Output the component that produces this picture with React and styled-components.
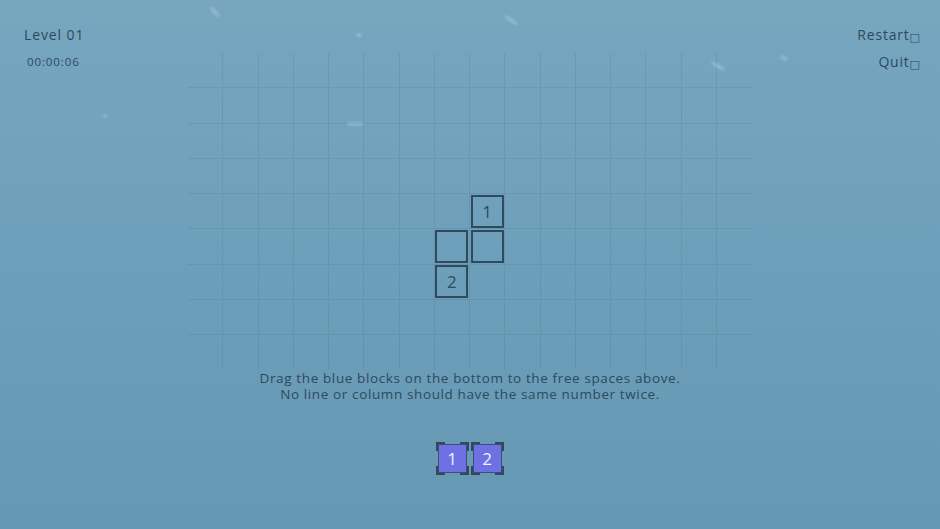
import React from 'react';
import styled, { createGlobalStyle } from 'styled-components';

const COLS = 16;
const ROWS = 9;

// pieces already placed on the board: [col, row, number]
const placed = [
  [8, 4, '1'],
  [7, 5, ''],
  [8, 5, ''],
  [7, 6, '2'],
];

const tray = ['1', '2'];

const flakes = [
  { x: 208, y: 10, w: 14, r: 45 },
  { x: 503, y: 18, w: 16, r: 35 },
  { x: 356, y: 33, w: 6, r: 0 },
  { x: 346, y: 122, w: 18, r: 0 },
  { x: 710, y: 64, w: 16, r: 30 },
  { x: 780, y: 56, w: 8, r: 20 },
  { x: 103, y: 114, w: 4, r: 70 },
];

const GlobalStyle = createGlobalStyle`
  html, body {
    margin: 0;
    padding: 0;
  }
  body {
    font-family: "Open Sans", "Liberation Sans", sans-serif;
    color: #2c4a5e;
  }
`;

function App() {
  const cells = [];
  for (let r = 0; r < ROWS; r++) {
    for (let c = 0; c < COLS; c++) {
      const piece = placed.find(p => p[0] === c && p[1] === r);
      cells.push(
        <Cell key={`${r}-${c}`} lastCol={c === COLS - 1} lastRow={r === ROWS - 1}>
          {piece && <Block>{piece[2]}</Block>}
        </Cell>
      );
    }
  }

  return (
    <Screen>
      <GlobalStyle />
      <Flakes>
        {flakes.map((f, i) => (
          <Flake key={i} style={{ left: f.x, top: f.y, width: f.w, transform: `rotate(${f.r}deg)` }} />
        ))}
      </Flakes>
      <LeftHud>
        <LevelTitle>Level 01</LevelTitle>
        <Timer>00:00:06</Timer>
      </LeftHud>
      <Center>
        <Board>{cells}</Board>
        <Hint>
          <HintLine>Drag the blue blocks on the bottom to the free spaces above.</HintLine>
          <HintLine>No line or column should have the same number twice.</HintLine>
        </Hint>
        <Tray>
          {tray.map(n => (
            <Slot key={n}>
              <Corner top left />
              <Corner top right />
              <Corner bottom left />
              <Corner bottom right />
              <Piece>{n}</Piece>
            </Slot>
          ))}
        </Tray>
      </Center>
      <RightHud>
        <MenuItem>Restart<Tofu>□</Tofu></MenuItem>
        <MenuItem>Quit<Tofu>□</Tofu></MenuItem>
      </RightHud>
    </Screen>
  );
}

const Screen = styled.div`
  position: relative;
  width: 940px;
  height: 529px;
  overflow: hidden;
  display: grid;
  grid-template-columns: 1fr 564px 1fr;
  background: linear-gradient(180deg, #77a6bf 0%, #6e9fba 50%, #6697b3 100%);
`;

const Flakes = styled.div`
  position: absolute;
  inset: 0;
  pointer-events: none;
`;

const Flake = styled.div`
  position: absolute;
  height: 4px;
  border-radius: 50%;
  background: rgba(215, 232, 244, 0.28);
  filter: blur(1.2px);
`;

const LeftHud = styled.div`
  display: flex;
  flex-direction: column;
  align-items: flex-start;
  padding: 26px 0 0 24px;
`;

const LevelTitle = styled.div`
  font-size: 14px;
  line-height: 18px;
  letter-spacing: 0.9px;
`;

const Timer = styled.div`
  margin: 11px 0 0 3px;
  font-size: 11.5px;
  line-height: 14px;
  letter-spacing: 0.9px;
`;

const RightHud = styled.div`
  display: flex;
  flex-direction: column;
  align-items: flex-end;
  gap: 9px;
  padding: 26px 20px 0 0;
`;

const MenuItem = styled.div`
  display: flex;
  align-items: center;
  height: 18px;
  font-size: 14px;
  line-height: 18px;
  letter-spacing: 0.8px;
`;

const Tofu = styled.span`
  font-family: "DejaVu Sans", sans-serif;
  font-size: 11px;
  line-height: 11px;
  letter-spacing: 0;
  position: relative;
  top: 2px;
`;

const Center = styled.div`
  display: flex;
  flex-direction: column;
  align-items: center;
  padding-top: 53px;
`;

const Board = styled.div`
  display: grid;
  grid-template-columns: repeat(${COLS}, 35.25px);
  grid-template-rows: repeat(${ROWS}, 35.25px);
`;

const Cell = styled.div`
  display: flex;
  align-items: center;
  justify-content: center;
  box-sizing: border-box;
  border-right: ${p => (p.lastCol ? 'none' : '1px solid rgba(50, 85, 110, 0.13)')};
  border-bottom: ${p => (p.lastRow ? 'none' : '1px solid rgba(50, 85, 110, 0.13)')};
`;

const Block = styled.div`
  box-sizing: border-box;
  width: 33px;
  height: 33px;
  border: 2px solid #2f4a5c;
  display: flex;
  align-items: center;
  justify-content: center;
  font-size: 17px;
  color: #2f4a5c;
`;

const Hint = styled.div`
  display: flex;
  flex-direction: column;
  align-items: center;
`;

const HintLine = styled.div`
  font-size: 13.5px;
  line-height: 16px;
  height: 16px;
  letter-spacing: 0.62px;
  white-space: nowrap;
`;

const Tray = styled.div`
  display: flex;
  gap: 2px;
  margin-top: 40px;
  margin-left: -1px;
`;

const Slot = styled.div`
  position: relative;
  box-sizing: border-box;
  width: 33px;
  height: 33px;
  padding: 2px;
`;

const Corner = styled.span`
  position: absolute;
  width: 7px;
  height: 7px;
  ${p => (p.top ? 'top: 0;' : 'bottom: 0;')}
  ${p => (p.left ? 'left: 0;' : 'right: 0;')}
  border-color: #2f4a5c;
  border-style: solid;
  border-width: ${p => `${p.top ? 2 : 0}px ${p.right ? 2 : 0}px ${p.bottom ? 2 : 0}px ${p.left ? 2 : 0}px`};
`;

const Piece = styled.div`
  box-sizing: border-box;
  width: 100%;
  height: 100%;
  background: #6e70e4;
  border: 1px solid #3d4e7a;
  display: flex;
  align-items: center;
  justify-content: center;
  font-size: 17px;
  color: #f2f2ff;
`;

export default App;
